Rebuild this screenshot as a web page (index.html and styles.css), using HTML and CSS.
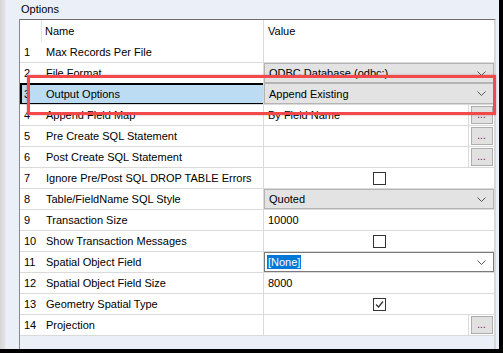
FILE: index.html
```html
<!DOCTYPE html>
<html>
<head>
    <title>Options</title>
    <link rel="stylesheet" href="styles.css">
</head>
<body>
    <div class="frame">
        <div class="panel">
            <div class="group-title">Options</div>
            <div class="grid">
                <div class="row header">
                    <div class="num"></div>
                    <div class="name">Name</div>
                    <div class="val">Value</div>
                </div>
                <div class="row">
                    <div class="num">1</div>
                    <div class="name">Max Records Per File</div>
                    <div class="val"></div>
                </div>
                <div class="row">
                    <div class="num">2</div>
                    <div class="name">File Format</div>
                    <div class="val"><div class="combo">ODBC Database (odbc:)<svg class="chev" width="9" height="5" viewBox="0 0 9 5"><polyline points="0.5,0.5 4.5,4.5 8.5,0.5" fill="none" stroke="#555" stroke-width="1"/></svg></div></div>
                </div>
                <div class="row selected">
                    <div class="num">3</div>
                    <div class="name">Output Options</div>
                    <div class="val"><div class="combo">Append Existing<svg class="chev" width="9" height="5" viewBox="0 0 9 5"><polyline points="0.5,0.5 4.5,4.5 8.5,0.5" fill="none" stroke="#555" stroke-width="1"/></svg></div></div>
                </div>
                <div class="row">
                    <div class="num">4</div>
                    <div class="name">Append Field Map</div>
                    <div class="val"><span class="text">By Field Name</span><div class="btn-cell"><div class="dots">...</div></div></div>
                </div>
                <div class="row">
                    <div class="num">5</div>
                    <div class="name">Pre Create SQL Statement</div>
                    <div class="val"><span class="text"></span><div class="btn-cell"><div class="dots">...</div></div></div>
                </div>
                <div class="row">
                    <div class="num">6</div>
                    <div class="name">Post Create SQL Statement</div>
                    <div class="val"><span class="text"></span><div class="btn-cell"><div class="dots">...</div></div></div>
                </div>
                <div class="row">
                    <div class="num">7</div>
                    <div class="name">Ignore Pre/Post SQL DROP TABLE Errors</div>
                    <div class="val center"><div class="check"></div></div>
                </div>
                <div class="row">
                    <div class="num">8</div>
                    <div class="name">Table/FieldName SQL Style</div>
                    <div class="val"><div class="combo">Quoted<svg class="chev" width="9" height="5" viewBox="0 0 9 5"><polyline points="0.5,0.5 4.5,4.5 8.5,0.5" fill="none" stroke="#555" stroke-width="1"/></svg></div></div>
                </div>
                <div class="row">
                    <div class="num">9</div>
                    <div class="name">Transaction Size</div>
                    <div class="val"><span class="text">10000</span></div>
                </div>
                <div class="row">
                    <div class="num">10</div>
                    <div class="name">Show Transaction Messages</div>
                    <div class="val center"><div class="check"></div></div>
                </div>
                <div class="row">
                    <div class="num">11</div>
                    <div class="name">Spatial Object Field</div>
                    <div class="val"><div class="combo edit"><span class="picked">[None]</span><svg class="chev" width="9" height="5" viewBox="0 0 9 5"><polyline points="0.5,0.5 4.5,4.5 8.5,0.5" fill="none" stroke="#555" stroke-width="1"/></svg></div></div>
                </div>
                <div class="row">
                    <div class="num">12</div>
                    <div class="name">Spatial Object Field Size</div>
                    <div class="val"><span class="text">8000</span></div>
                </div>
                <div class="row">
                    <div class="num">13</div>
                    <div class="name">Geometry Spatial Type</div>
                    <div class="val center"><div class="check"><svg width="11" height="11" viewBox="0 0 11 11"><polyline points="2,5.5 4.5,8 9,2.5" fill="none" stroke="#333" stroke-width="1.3"/></svg></div></div>
                </div>
                <div class="row">
                    <div class="num">14</div>
                    <div class="name">Projection</div>
                    <div class="val"><span class="text"></span><div class="btn-cell"><div class="dots">...</div></div></div>
                </div>
            </div>
        </div>
        <div class="highlight"></div>
    </div>
</body>
</html>
```

FILE: styles.css
```css
body {
    margin: 0;
    background: #000;
    font-family: "Liberation Sans", Arial, sans-serif;
    font-size: 11px;
    color: #000;
}

.frame {
    position: relative;
    width: 499px;
    height: 349px;
    overflow: hidden;
}

.panel {
    display: flex;
    flex-direction: column;
    height: 100%;
    padding: 0 3px 0 19px;
    box-sizing: border-box;
    background: linear-gradient(to right, #d4d4d4 0, #e4e4e4 5px, #ebeff8 6px);
}

.group-title {
    height: 19px;
    line-height: 19px;
    padding-left: 2px;
}

.grid {
    flex: 1;
    border-top: 1px solid #6e6e6e;
    border-left: 1px solid #8a8a8a;
    border-right: 2px solid #d9d9d9;
    background: #ebeff8;
}

.row {
    display: flex;
    height: 21px;
    box-sizing: border-box;
    border-bottom: 1px solid #dadada;
    background: #fff;
}

.row.header {
    height: 22px;
    border-bottom: none;
}

.num {
    width: 22px;
    padding-left: 4px;
    box-sizing: border-box;
    display: flex;
    align-items: center;
}

.name {
    width: 221px;
    padding-left: 4px;
    box-sizing: border-box;
    display: flex;
    align-items: center;
    white-space: nowrap;
}

.header .num {
    border-right: 1px solid #e3e3e3;
}

.header .name {
    padding-left: 3px;
}

.val {
    flex: 1;
    display: flex;
    align-items: center;
    border-left: 1px solid #dadada;
    min-width: 0;
}

.val.center {
    justify-content: center;
}

.text {
    flex: 1;
    padding-left: 4px;
}

.header .val {
    padding-left: 4px;
}

.selected {
    margin-top: -1px;
    height: 22px;
}

.selected .num,
.selected .name {
    background: #bcdcf4;
    border-top: 2px solid #000;
    border-bottom: 1px solid #000;
}

.selected .num {
    border-left: 2px solid #000;
    padding-left: 2px;
}

.combo {
    flex: 1;
    align-self: stretch;
    display: flex;
    align-items: center;
    justify-content: space-between;
    padding: 0 7px 0 4px;
    background: #e3e3e3;
    border: 1px solid #b4b4b4;
}

.combo.edit {
    background: #fff;
    border-color: #7a7a7a;
    padding-left: 2px;
}

.picked {
    background: #0078d7;
    color: #fff;
    padding: 1px 1px;
}

.btn-cell {
    align-self: stretch;
    width: 25px;
    border-left: 1px solid #dadada;
    display: flex;
    align-items: center;
    justify-content: center;
}

.dots {
    width: 20px;
    height: 16px;
    background: #e1e1e1;
    border: 1px solid #adadad;
    color: #800080;
    font-size: 10px;
    line-height: 15px;
    text-align: center;
}

.check {
    width: 11px;
    height: 11px;
    border: 1px solid #333;
    background: #fff;
}

.check svg {
    display: block;
}

.highlight {
    position: absolute;
    left: 27px;
    top: 75px;
    width: 463px;
    height: 34px;
    border: 3px solid #f24a4a;
    box-shadow: 0 0 2px rgba(120, 0, 0, 0.35);
}
```
